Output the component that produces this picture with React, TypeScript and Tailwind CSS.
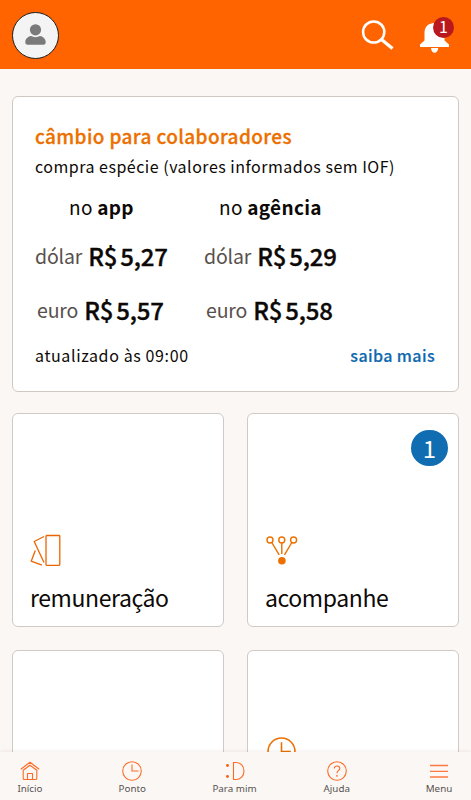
import type { ReactNode } from "react";

interface RateProps {
  currency: string;
  value: string;
}

interface TileProps {
  icon?: ReactNode;
  label?: string;
  badge?: number;
}

interface NavItemProps {
  icon: ReactNode;
  label: string;
}

function Header() {
  return (
    <header className="flex h-[69px] shrink-0 items-start justify-between bg-[#ff6400] pl-3 pr-4 pt-3">
      <div className="flex h-[47px] w-[47px] items-center justify-center rounded-full border border-[#1c1c1c] bg-[#f4f4f4]">
        <svg width="21" height="21" viewBox="0 0 21 21" fill="#7a7a7a" className="-mt-[3px]">
          <circle cx="10.5" cy="5.8" r="5.6" />
          <path d="M6 12C2.5 12.6.3 15.2.3 18.2c0 1.700.9 2.500 2.500 2.500h15.400c1.600 0 2.500-.8 2.500-2.500 0-3-2.200-5.600-5.700-6.200-2.500 1.500-6.500 1.500-9 0Z" />
        </svg>
      </div>
      <div className="flex gap-6 pt-1">
        <svg width="34" height="36" viewBox="0 0 34 36" fill="none" stroke="#fff">
          <circle cx="12.700" cy="16" r="10.600" strokeWidth="2.500" />
          <path d="M20.200 23.300 31.500 32.500" strokeWidth="3.300" />
        </svg>
        <div className="relative">
          <svg width="36" height="38" viewBox="0 0 36 38" fill="#fff">
            <path d="M1 31v-2.500l4.500-4V17C5.500 10.500 9.500 7 15.500 7S25.500 10.500 25.500 17v7.500l4.500 4V31ZM12 32h7.200c0 2.500-1.500 4.800-3.600 4.800S12 34.500 12 32Z" />
          </svg>
          <span className="absolute left-[14px] top-[1px] flex h-[21px] w-[21px] items-center justify-center rounded-full bg-[#b9191e] pb-[3px] text-[16px] leading-none text-white">
            1
          </span>
        </div>
      </div>
    </header>
  );
}

function Rate({ currency, value }: RateProps) {
  return (
    <p className="flex items-start gap-[6px]">
      <span className="pt-[1px] text-[19.500px] leading-[28px] tracking-[-0.15px] text-[#57504c]">{currency}</span>
      <span className="text-[24px] font-medium leading-[30px] tracking-[-0.2px] text-[#0d0906] [-webkit-text-stroke:0.35px_#0d0906] [word-spacing:-2.200px]">
        R$ {value}
      </span>
    </p>
  );
}

function ExchangeCard() {
  return (
    <section className="h-[296px] rounded-md border border-[#cfc9c5] bg-white pl-[22px] pr-[23px] pt-[26px]">
      <h2 className="text-[19px] font-medium leading-[26px] tracking-[0.38px] text-[#ec7000] [-webkit-text-stroke:0.3px_#ec7000]">
        câmbio para colaboradores
      </h2>
      <p className="mt-[5px] text-[16px] leading-6 tracking-[0.5px]">
        compra espécie (valores informados sem IOF)
      </p>
      <div className="mt-[15px] flex text-[19px] leading-7 tracking-[0.3px]">
        <p className="w-[150px] pl-[34px]">
          no <b>app</b>
        </p>
        <p className="pl-[34px]">
          no <b>agência</b>
        </p>
      </div>
      <div className="mt-5 flex">
        <div className="w-[169px]">
          <Rate currency="dólar" value="5,27" />
        </div>
        <Rate currency="dólar" value="5,29" />
      </div>
      <div className="mt-6 flex pl-[2px]">
        <div className="w-[169px]">
          <Rate currency="euro" value="5,57" />
        </div>
        <Rate currency="euro" value="5,58" />
      </div>
      <div className="mt-[18px] flex justify-between text-[16px] leading-6 tracking-[0.4px]">
        <span className="tracking-[0.62px]">atualizado às 09:00</span>
        <a className="font-medium text-[#0f69af] [-webkit-text-stroke:0.2px_#0f69af]">saiba mais</a>
      </div>
    </section>
  );
}

function Tile({ icon, label, badge }: TileProps) {
  return (
    <div className="relative h-[214px] rounded-md border border-[#d0cac6] bg-white pl-[17px] pt-[119px]">
      {badge && (
        <span className="absolute right-[10px] top-[16px] flex h-9 w-[37px] items-center justify-center rounded-full bg-[#106db2] text-[24px] leading-none text-white">
          {badge}
        </span>
      )}
      <div className="h-[36px]">{icon}</div>
      <p className="mt-[11px] text-[23px] leading-[34px] tracking-[-0.4px]">{label}</p>
    </div>
  );
}

function CardsIcon() {
  return (
    <svg width="34" height="36" viewBox="0 0 34 36" fill="none" stroke="#ec6500" strokeWidth="1.300">
      <rect x="16" y="2.500" width="13.800" height="29.800" rx=".8" />
      <path d="M14 3.500 4.200 8.500l9.800 21M5.300 17.500 1.200 28.200l10.700 4" strokeLinejoin="round" />
    </svg>
  );
}

function BranchesIcon() {
  return (
    <svg width="34" height="36" viewBox="0 0 34 36" fill="none" stroke="#ec7000" strokeWidth="1.400">
      <circle cx="5" cy="7" r="3" />
      <circle cx="16.800" cy="7" r="3" />
      <circle cx="28.600" cy="7" r="3" />
      <path d="m6.800 9.500 7.400 12.300M16.800 10v11M26.800 9.500l-7.300 12.300" />
      <circle cx="16.900" cy="27.700" r="3.800" fill="#ec7000" stroke="none" />
    </svg>
  );
}

function ClockIcon({ size, color }: { size: number; color: string }) {
  return (
    <svg width={size} height={size} viewBox="0 0 28 28" fill="none" stroke={color} strokeWidth="1.500">
      <circle cx="14" cy="14" r="13" />
      <path d="M14 5v9h9" />
    </svg>
  );
}

function NavItem({ icon, label }: NavItemProps) {
  return (
    <a className="flex w-[60px] flex-col items-center">
      <span className="flex h-[22px] items-center">{icon}</span>
      <span className="whitespace-nowrap text-[9.800px] leading-[14px]">{label}</span>
    </a>
  );
}

function BottomNav() {
  return (
    <nav className="relative flex h-12 shrink-0 justify-between bg-[#fbf7f5] pr-[2px] pt-2 font-['Noto_Sans',sans-serif] text-[#575250] shadow-[0_-1px_3px_rgba(80,50,30,0.08)]">
      <NavItem
        label="Início"
        icon={
          <svg width="20" height="20" viewBox="0 0 20 20" fill="none" stroke="#ff6b25" strokeWidth="1.100" strokeLinejoin="round">
            <path d="M.8 8.200 10 1.200l9.200 7M3.200 9.300v7.900c0 .8.500 1.300 1.300 1.300h11c.8 0 1.300-.5 1.300-1.300V9.300L10 4.200Z" />
            <path d="M7.500 18.500v-6h5v6" />
          </svg>
        }
      />
      <NavItem label="Ponto" icon={<ClockIcon size={20} color="#ff6b25" />} />
      <NavItem
        label="Para mim"
        icon={
          <svg width="20" height="20" viewBox="0 0 20 20" fill="none" stroke="#ff6b25" strokeWidth="1.100">
            <circle cx="2.500" cy="4.500" r="1.400" fill="#ff5a0a" stroke="none" />
            <circle cx="2.500" cy="15.500" r="1.400" fill="#ff5a0a" stroke="none" />
            <path d="M8.500 1.500h2.200c5 0 8.300 3.600 8.300 8.500s-3.300 8.500-8.300 8.500H8.500Z" />
          </svg>
        }
      />
      <NavItem
        label="Ajuda"
        icon={
          <svg width="20" height="20" viewBox="0 0 20 20" fill="none" stroke="#ff6b25" strokeWidth="1.100">
            <circle cx="10" cy="10" r="9.300" />
            <path d="M7.200 7.500C7.300 5.900 8.400 5 10 5s2.800 1 2.800 2.400c0 2-2.800 2.200-2.800 4.800" />
            <circle cx="10" cy="14.800" r=".9" fill="#ff6b25" stroke="none" />
          </svg>
        }
      />
      <NavItem
        label="Menu"
        icon={
          <svg width="18" height="16" viewBox="0 0 18 16" stroke="#ff7a40" strokeWidth="1.300">
            <path d="M0 2.500h18M0 8.300h18M0 14h18" />
          </svg>
        }
      />
    </nav>
  );
}

export default function App() {
  return (
    <div className="flex h-[800px] w-[471px] flex-col overflow-hidden bg-[#fbf7f5] font-['Noto_Sans_CJK_SC','Noto_Sans',sans-serif] text-[#0d0906]">
      <Header />
      <main className="min-h-0 flex-1 overflow-hidden px-3 pt-[27px]">
        <ExchangeCard />
        <div className="mt-[21px] grid grid-cols-2 gap-x-[23px] gap-y-[23px]">
          <Tile label="remuneração" icon={<CardsIcon />} />
          <Tile label="acompanhe" badge={1} icon={<BranchesIcon />} />
          <Tile />
          <Tile
            icon={
              <div className="-mt-[33px] pl-[2px]">
                <ClockIcon size={29} color="#ec7000" />
              </div>
            }
          />
        </div>
      </main>
      <BottomNav />
    </div>
  );
}
